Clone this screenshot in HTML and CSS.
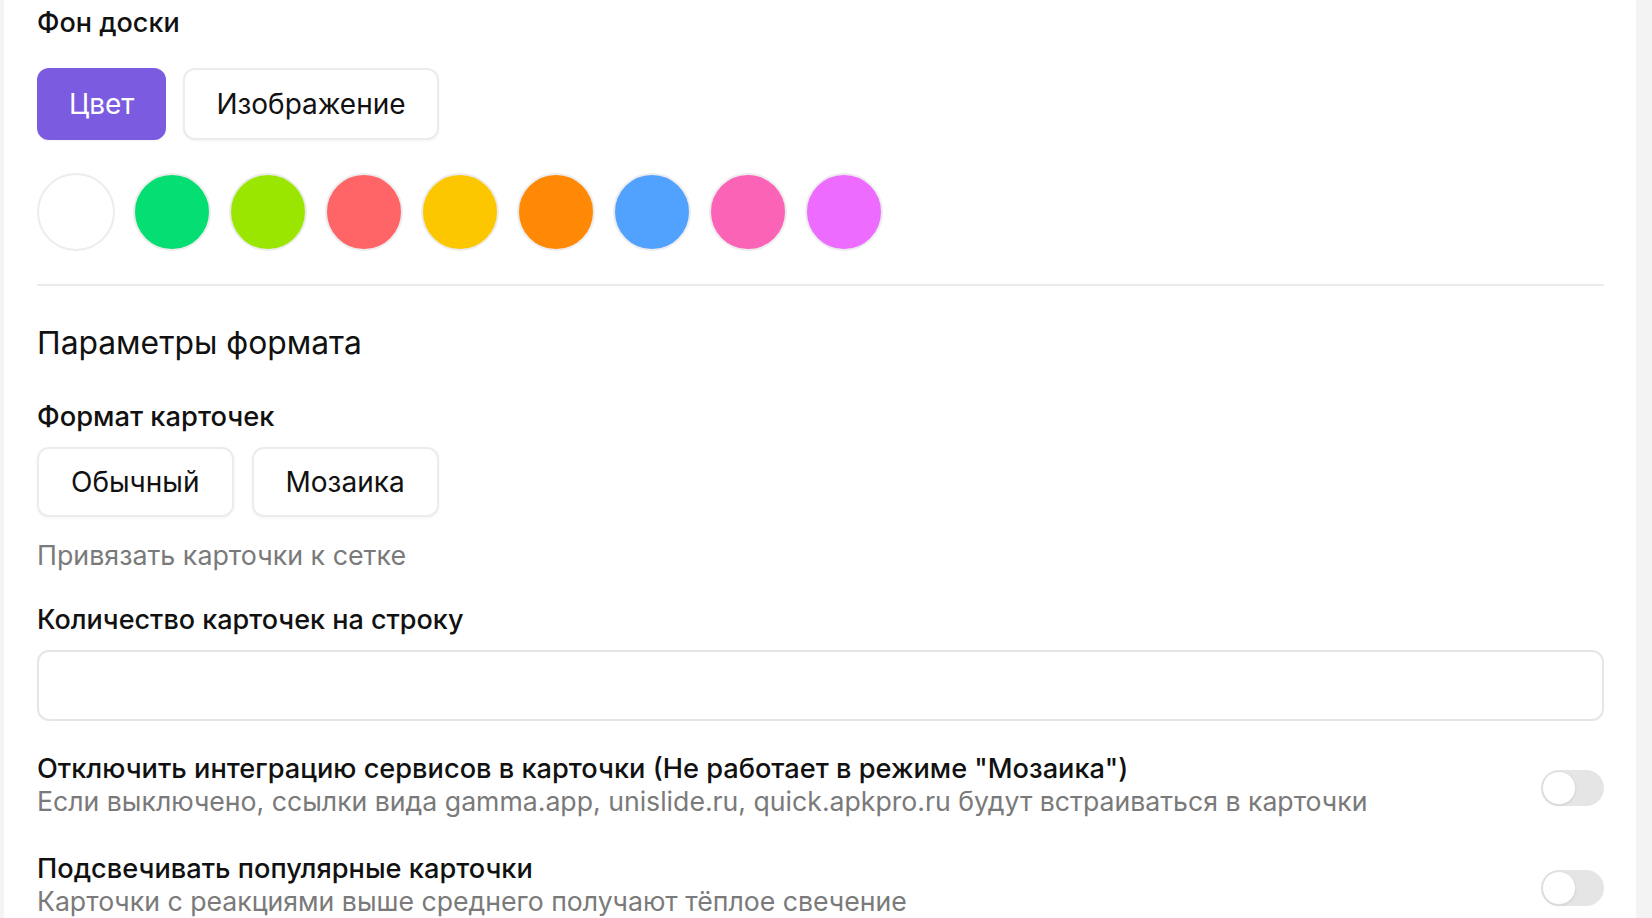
FILE: index.html
```html
<!DOCTYPE html>
<html lang="ru">
<head>
<meta charset="utf-8">
<title>Настройки доски</title>
<link rel="stylesheet" href="styles.css">
</head>
<body>
<div class="page">
  <main class="panel">
    <h3 class="label label-first">Фон доски</h3>
    <div class="btn-row btn-row-bg">
      <button class="btn btn-active">Цвет</button>
      <button class="btn">Изображение</button>
    </div>
    <div class="swatches">
      <span class="swatch" style="background:#ffffff"></span>
      <span class="swatch" style="background:#05de72"></span>
      <span class="swatch" style="background:#9ae600"></span>
      <span class="swatch" style="background:#ff6467"></span>
      <span class="swatch" style="background:#fdc700"></span>
      <span class="swatch" style="background:#ff8904"></span>
      <span class="swatch" style="background:#51a2ff"></span>
      <span class="swatch" style="background:#fb64b6"></span>
      <span class="swatch" style="background:#ed6bff"></span>
    </div>
    <hr class="divider">
    <h2 class="section-title">Параметры формата</h2>
    <h3 class="label label-format">Формат карточек</h3>
    <div class="btn-row btn-row-format">
      <button class="btn">Обычный</button>
      <button class="btn">Мозаика</button>
    </div>
    <p class="hint">Привязать карточки к сетке</p>
    <h3 class="label label-count">Количество карточек на строку</h3>
    <input class="text-input" type="text">
    <div class="toggle-row toggle-row-1">
      <div class="toggle-text">
        <div class="toggle-title">Отключить интеграцию сервисов в карточки (Не работает в режиме "Мозаика")</div>
        <div class="toggle-desc">Если выключено, ссылки вида gamma.app, unislide.ru, quick.apkpro.ru будут встраиваться в карточки</div>
      </div>
      <span class="toggle"><span class="knob"></span></span>
    </div>
    <div class="toggle-row toggle-row-2">
      <div class="toggle-text">
        <div class="toggle-title">Подсвечивать популярные карточки</div>
        <div class="toggle-desc">Карточки с реакциями выше среднего получают тёплое свечение</div>
      </div>
      <span class="toggle"><span class="knob"></span></span>
    </div>
  </main>
</div>
</body>
</html>
```

FILE: styles.css
```css
* { box-sizing: border-box; }
html, body {
  margin: 0;
  padding: 0;
  height: 100%;
  overflow: hidden;
}
body {
  background: #f3f3f3;
  font-family: Inter, "Noto Sans", "Liberation Sans", sans-serif;
  color: #111111;
}
.page {
  padding: 0 16px 0 4px;
  height: 100%;
}
.panel {
  background: #ffffff;
  height: 100%;
  padding: 6px 32px 0 33px;
  display: flex;
  flex-direction: column;
  align-items: stretch;
}
.panel > * { flex-shrink: 0; }
.label {
  margin: 0;
  font-size: 27px;
  line-height: 33px;
  font-weight: 500;
  color: #111111;
}
.label-format { margin-top: 37px; font-size: 27.3px; }
.label-count { margin-top: 32px; }
.btn-row {
  display: flex;
  gap: 17px;
}
.btn-row-bg { margin-top: 29px; }
.btn-row-format { margin-top: 14px; gap: 18px; }
.btn {
  font-family: inherit;
  font-size: 28px;
  font-weight: 400;
  color: #111111;
  background: #ffffff;
  border: 2px solid #ececec;
  border-radius: 12px;
  height: 72px;
  padding: 0 31px;
  box-shadow: 0 1px 3px rgba(0,0,0,0.05);
  cursor: pointer;
}
.btn-row-bg .btn-active { padding: 0 30px; }
.btn-row-format .btn { height: 70px; padding: 0 32px; }
.btn-active {
  background: #7b5ce0;
  border-color: #7b5ce0;
  color: #ffffff;
}
.swatches {
  display: flex;
  gap: 18px;
  margin-top: 33px;
}
.swatch {
  width: 78px;
  height: 78px;
  border-radius: 50%;
  border: 2px solid #ececec;
  flex: none;
}
.divider {
  margin: 33px 0 0;
  border: none;
  height: 2px;
  background: #ebebeb;
}
.section-title {
  margin: 36px 0 0;
  font-size: 31.8px;
  line-height: 41px;
  font-weight: 400;
  color: #111111;
}
.hint {
  margin: 22px 0 0;
  font-size: 26.8px;
  line-height: 32px;
  color: #7a7a7a;
}
.text-input {
  margin-top: 14px;
  height: 71px;
  border: 2px solid #e6e6e6;
  border-radius: 12px;
  background: #ffffff;
  font-family: inherit;
  font-size: 27px;
  padding: 0 20px;
  outline: none;
}
.toggle-row {
  display: flex;
  justify-content: space-between;
  align-items: flex-start;
  gap: 24px;
}
.toggle-row-1 { margin-top: 31px; }
.toggle-row-2 { margin-top: 34px; }
.toggle-title {
  font-size: 27.2px;
  line-height: 33px;
  font-weight: 500;
  color: #111111;
}
.toggle-desc {
  font-size: 26.65px;
  line-height: 33px;
  color: #7a7a7a;
}
.toggle {
  flex: none;
  margin-top: 18px;
  width: 63px;
  height: 36px;
  border-radius: 18px;
  background: #e5e5e5;
  display: flex;
  align-items: center;
  padding: 0 1px;
}
.knob {
  width: 34px;
  height: 34px;
  border-radius: 50%;
  background: #ffffff;
  border: 1px solid #dedede;
  box-shadow: 0 1px 2px rgba(0,0,0,0.08);
}
```
